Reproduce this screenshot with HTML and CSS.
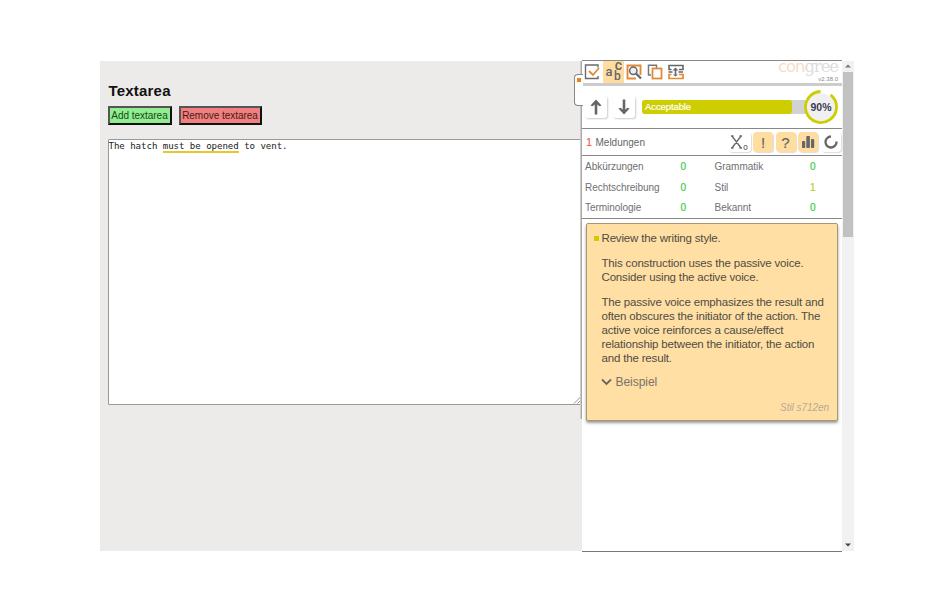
FILE: index.html
```html
<!DOCTYPE html>
<html lang="de">
<head>
<meta charset="utf-8">
<title>Textarea</title>
<link rel="stylesheet" href="styles.css">
</head>
<body>
<div class="app">
  <main class="editor">
    <h1>Textarea</h1>
    <div class="actions"><button class="add">Add textarea</button><button class="remove">Remove textarea</button></div>
    <div class="textarea">The hatch <span class="mark">must be opened</span> to vent.
      <svg class="grip" width="8" height="8" viewBox="0 0 8 8"><path d="M1 7.500 7.500 1M4.500 7.500 7.500 4.500" stroke="#777" stroke-width=".8"/></svg>
    </div>
  </main>
  <aside class="panel">
    <div class="handle"><i></i></div>
    <div class="toolbar">
      <span class="tool"><svg width="16" height="16" viewBox="0 0 16 16" fill="none"><path d="M14 3.500V1H1.500v13.500H14V12" stroke="#6b6b6b" stroke-width="1.400"/><path d="m5 7 4 4 6-7" stroke="#e08a35" stroke-width="1.800"/></svg></span>
      <span class="tool active abc"><b class="a">a</b><b class="b">b</b><b class="c">c</b></span>
      <span class="tool"><svg width="16" height="16" viewBox="0 0 16 16" fill="none"><path d="M10 14.500H1.500v-13h13V11" stroke="#e08a35" stroke-width="1.900"/><circle cx="7.300" cy="6.800" r="3.700" fill="#eee" stroke="#666" stroke-width="1.500"/><path d="m10 9.500 5 5" stroke="#666" stroke-width="2.300"/></svg></span>
      <span class="tool"><svg width="16" height="16" viewBox="0 0 16 16" fill="none"><path d="M4 11H1.500V1.300h8V4" stroke="#777" stroke-width="1.500"/><rect x="5.500" y="4.500" width="9" height="10" stroke="#e08a35" stroke-width="1.800"/></svg></span>
      <span class="tool"><svg width="16" height="16" viewBox="0 0 16 16" fill="none"><path d="M3.500 5.500H1v-4h14v4h-4M.5 8h4M10.500 8H15" stroke="#666" stroke-width="1.600"/><path d="M3.500 10.500H1v4h14v-4h-4" stroke="#e08a35" stroke-width="1.700"/><path d="M7.500 5v6" stroke="#666" stroke-width="1.600"/><path d="m4.500 6.500 3-3 3 3zM5 10.500l2.500 2 2.500-2z" fill="#666"/></svg></span>
      <div class="brand"><div class="logo"><span>con</span>gree</div><div class="version">v2.38.0</div></div>
    </div>
    <div class="progress">
      <span class="arrow"><svg width="12" height="16" viewBox="0 0 12 16"><path d="M6 15.500V4" fill="none" stroke="#666" stroke-width="2.600"/><path d="M.5 6.500 6 .5l5.500 6-2 .8L6 4.500 2.500 7.300z" fill="#666"/></svg></span>
      <span class="arrow"><svg width="12" height="16" viewBox="0 0 12 16"><path d="M6 .5V12" fill="none" stroke="#666" stroke-width="2.600"/><path d="m.5 9.500 5.500 6 5.500-6-2-.8L6 11.500 2.500 8.700z" fill="#666"/></svg></span>
      <div class="track"><div class="fill">Acceptable</div></div>
      <div class="score"><svg width="34" height="34" viewBox="0 0 34 34"><circle cx="17" cy="17" r="15.500" fill="#f0f0f2"/><path d="M16.500 1.500A15.500 15.500 0 0 1 26.600 4.800" fill="none" stroke="#fff" stroke-width="3.500"/><path d="M26.600 4.800A15.500 15.500 0 1 1 16.500 1.500" fill="none" stroke="#cdcd00" stroke-width="2.800"/></svg><span>90%</span></div>
    </div>
    <div class="messages">
      <span class="count">1</span><span class="label">Meldungen</span>
      <div class="filters">
        <span class="chip plain wide"><svg width="13" height="14" viewBox="0 0 13 14"><path d="m2 1 9 12M11 1 2 13M1 1h2.500M9.500 1H12M1 13h2.500M9.500 13H12" stroke="#666" stroke-width="1.300"/></svg><sub>0</sub></span>
        <span class="chip">!</span>
        <span class="chip">?</span>
        <span class="chip"><svg width="14" height="14" viewBox="0 0 14 14" fill="#666"><rect x="1" y="6" width="3.200" height="7" rx=".8"/><rect x="5.300" y="1" width="3.600" height="12" rx=".8"/><rect x="10" y="4" width="3.200" height="9" rx=".8"/></svg></span>
        <span class="chip plain"><svg width="14" height="14" viewBox="0 0 14 14"><path d="M7 1.500A5.500 5.500 0 1 0 12.500 6.500" fill="none" stroke="#666" stroke-width="2.300"/></svg></span>
      </div>
    </div>
    <div class="stats">
      <span>Abkürzungen</span><b>0</b><span>Grammatik</span><b>0</b>
      <span>Rechtschreibung</span><b>0</b><span>Stil</span><b class="warn">1</b>
      <span>Terminologie</span><b>0</b><span>Bekannt</span><b>0</b>
    </div>
    <article class="card">
      <p class="title">Review the writing style.</p>
      <p>This construction uses the passive voice.<br>Consider using the active voice.</p>
      <p>The passive voice emphasizes the result and<br>often obscures the initiator of the action. The<br>active voice reinforces a cause/effect<br>relationship between the initiator, the action<br>and the result.</p>
      <div class="example"><svg width="11" height="8" viewBox="0 0 11 8"><path d="m1 1.500 4.500 4.500L10 1.500" fill="none" stroke="#666" stroke-width="1.800"/></svg>Beispiel</div>
      <div class="rule">Stil s712en</div>
    </article>
  </aside>
  <div class="scrollbar">
    <svg width="6" height="4" viewBox="0 0 6 4"><path d="M0 3.500h6L3 .5z" fill="#777"/></svg>
    <div class="thumb"></div>
    <svg width="6" height="4" viewBox="0 0 6 4"><path d="M0 .5h6L3 3.500z" fill="#444"/></svg>
  </div>
</div>
</body>
</html>
```
FILE: styles.css
```css
* { box-sizing: border-box; }
body { margin: 0; padding: 60px 96px 0 100px; background: #fff; font-family: "Liberation Sans", Arial, sans-serif; overflow: hidden; }
.app { display: flex; height: 492px; }
.editor { width: 482px; flex: none; margin: 1px 0; padding: 21px 0 0 7.5px; background: #ecebea; overflow: hidden; }
h1 { margin: 0; font-size: 15px; line-height: 18px; letter-spacing: .2px; color: #111; padding-left: 1px; }
.actions { display: flex; gap: 7px; margin-top: 6px; }
.actions button { font: 10px/14px "Liberation Sans", Arial, sans-serif; height: 19px; padding: 0; border: 2px solid; border-color: #555 #111 #111 #555; letter-spacing: -.03px; white-space: nowrap; }
.actions .add { width: 64px; background: #90ee90; color: #174717; }
.actions .remove { width: 83px; background: #f08080; color: #4b1717; }
.textarea { position: relative; margin-top: 14px; width: 475px; height: 266px; border: 1px solid #999; background: #fff; font: 9.100px/13px "DejaVu Sans Mono", "Liberation Mono", monospace; letter-spacing: -.05px; color: #222; white-space: nowrap; border-radius: 1px; }
.mark { border-bottom: 2px solid #e8c62e; }
.grip { position: absolute; right: 1px; bottom: 0; }
.panel { position: relative; width: 260px; flex: none; background: #fff; border-top: 1px solid #888; border-bottom: 1px solid #777; }
.panel::before { content: ""; position: absolute; left: -2px; top: 0; width: 2px; height: 358px; background: linear-gradient(90deg, #ddd, #999); }
.handle { position: absolute; left: -8px; top: 13px; width: 9px; height: 32px; background: #fff; border: 1px solid #888; border-right: 0; border-radius: 4px 0 0 4px; }
.handle i { display: block; margin: 3px 0 0 2px; width: 4px; height: 4px; background: #e88420; }
.toolbar { display: flex; height: 25px; border-bottom: 3px solid #ccc; }
.tool { width: 20.900px; height: 22px; display: grid; place-items: center; flex: none; }
.tool svg { display: block; }
.active { background: #ffdda0; }
.abc { display: grid; grid-template-columns: 8px 9px; grid-template-rows: 9px 9px; padding: 1px 0 0 2px; place-items: center; place-content: start; }
.abc b { font: 500 13px/9px Roboto, sans-serif; color: #666; height: 9px; }
.abc .a { grid-area: 1 / 1 / 3 / 2; }
.abc .b { grid-area: 2 / 2; font-size: 12px; margin-top: 1px; }
.abc .c { grid-area: 1 / 2; margin: -2px 0 0 2px; font-size: 14px; }
.brand { margin-left: auto; margin-right: 4px; text-align: right; height: 22px; }
.logo { font: 16.500px/15px "DejaVu Serif", serif; color: #ddd; letter-spacing: -1.100px; height: 15px; margin-top: -2px; white-space: nowrap; }
.logo span { font-family: "DejaVu Sans", sans-serif; color: #f8dcc6; }
.version { font-size: 6px; line-height: 11px; color: #888; }
.progress { display: flex; align-items: center; height: 43px; padding-left: 3px; border-bottom: 1px solid #888; }
.arrow { display: grid; place-items: center; width: 22px; height: 22px; margin-right: 6px; border-radius: 3px; box-shadow: 1px 1px 2px #ccc; }
.track { width: 166px; height: 14px; margin-left: 1px; background: #d2d2d4; border-radius: 3px; flex: none; }
.fill { width: 150px; height: 14px; padding-left: 3px; background: #cdcd00; color: #fff; font-size: 9.500px; letter-spacing: -.1px; line-height: 14px; border-radius: 3px; -webkit-text-stroke: .2px #fff; }
.score { position: relative; width: 34px; height: 34px; flex: none; margin-left: -4px; }
.score svg { display: block; }
.score span { position: absolute; inset: 0; text-align: center; font: bold 10.500px/34px "Liberation Sans", sans-serif; color: #3c3c50; }
.messages { display: flex; align-items: center; height: 27px; padding-left: 4px; border-bottom: 1px solid #888; color: #666; font-size: 10px; }
.count { color: #ec5040; font-size: 11px; width: 9.500px; }
.filters { display: flex; gap: 2.500px; margin-left: auto; margin-right: 1.500px; }
.chip { display: flex; align-items: center; justify-content: center; width: 20px; height: 20px; border-radius: 4px; background: #ffdda0; box-shadow: 1px 1px 1px #ddd; color: #666; font-size: 15px; -webkit-text-stroke: .2px #666; }
.plain { background: #fff; }
.plain.wide { width: 23px; }
.chip sub { font-size: 8px; line-height: 8px; align-self: flex-end; color: #333; -webkit-text-stroke: 0; margin-bottom: 0; }
.stats { display: grid; grid-template-columns: 96px 33.500px 96px 1fr; grid-auto-rows: 20.700px; align-items: center; height: 63px; padding-left: 3px; border-bottom: 1px solid #888; font-size: 10px; color: #707070; }
.stats span { letter-spacing: -.03px; }
.stats b { font-weight: normal; color: #3ccc3c; -webkit-text-stroke: .2px; margin-left: -.5px; }
.stats .warn { color: #b8cc30; }
.card { position: relative; margin: 4px 4px 0 3.500px; height: 198px; padding: 7px 0 0 15px; background: #ffdfa3; border: 1px solid #aa9770; border-radius: 2px; box-shadow: 0 2px 3px #999; font-size: 11.500px; letter-spacing: -.17px; line-height: 14.100px; color: #504c45; white-space: nowrap; }
.card p { margin: 0 0 10.700px; }
.title::before { content: ""; position: absolute; left: 7px; top: 12px; width: 5px; height: 5px; background: #cdcd00; }
.example { display: flex; align-items: center; gap: 4px; margin: -1px 0 0 -1px; font-size: 12px; letter-spacing: -.05px; color: #77736b; }
.rule { margin: 12px 8px 0 0; text-align: right; font-size: 10px; letter-spacing: -.05px; font-style: italic; color: #b6aa97; }
.scrollbar { width: 12px; background: #f1f1f1; margin: 1px 0; display: flex; flex-direction: column; align-items: center; padding: 3px 0 4px; }
.thumb { width: 10px; height: 165px; background: #c1c1c1; margin: 4px 0 auto; }
```
